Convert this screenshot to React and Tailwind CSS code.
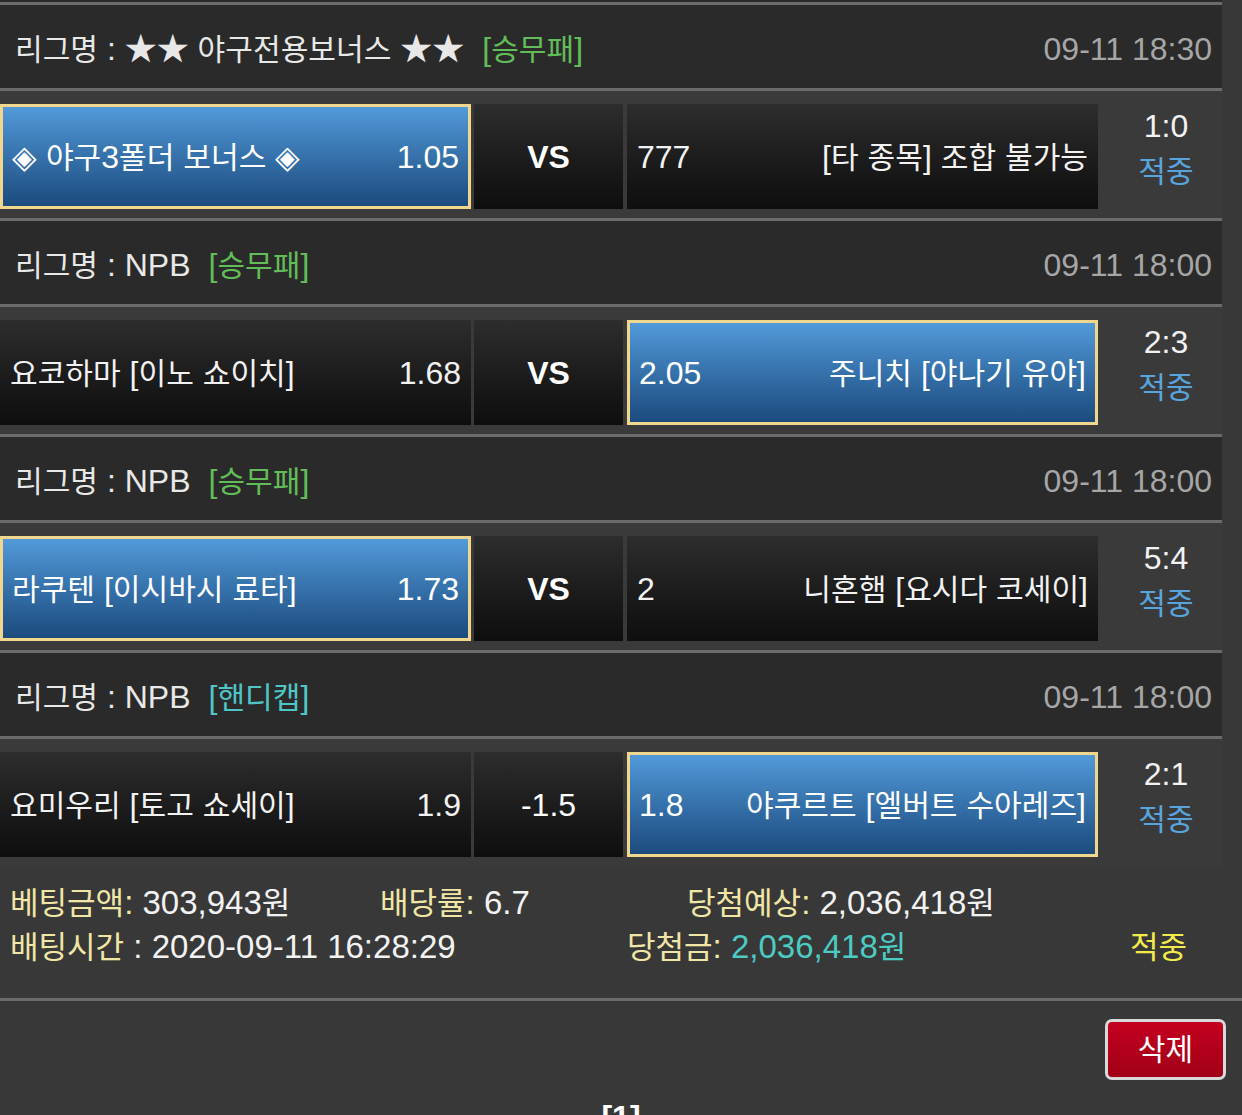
import React from 'react';

// Hangul glyphs in the original font are a bit narrower than Noto CJK's full em,
// so Hangul runs are set slightly smaller than the Latin text around them.
const HANGUL = /([\uAC00-\uD7A3]+)/;

function K({ children }) {
  return String(children)
    .split(HANGUL)
    .map((part, i) =>
      i % 2 ? (
        <span key={i} className="text-[0.94em]">
          {part}
        </span>
      ) : (
        part
      )
    );
}

const games = [
  {
    league: '★★ 야구전용보너스 ★★',
    tag: '승무패',
    tagClass: 'text-[#62bd58]',
    time: '09-11 18:30',
    home: '◈ 야구3폴더 보너스 ◈',
    homeOdds: '1.05',
    mid: 'VS',
    awayOdds: '777',
    away: '[타 종목] 조합 불가능',
    score: '1:0',
    pick: 'home',
  },
  {
    league: 'NPB',
    tag: '승무패',
    tagClass: 'text-[#62bd58]',
    time: '09-11 18:00',
    home: '요코하마 [이노 쇼이치]',
    homeOdds: '1.68',
    mid: 'VS',
    awayOdds: '2.05',
    away: '주니치 [야나기 유야]',
    score: '2:3',
    pick: 'away',
  },
  {
    league: 'NPB',
    tag: '승무패',
    tagClass: 'text-[#62bd58]',
    time: '09-11 18:00',
    home: '라쿠텐 [이시바시 료타]',
    homeOdds: '1.73',
    mid: 'VS',
    awayOdds: '2',
    away: '니혼햄 [요시다 코세이]',
    score: '5:4',
    pick: 'home',
  },
  {
    league: 'NPB',
    tag: '핸디캡',
    tagClass: 'text-[#4fc6c6]',
    time: '09-11 18:00',
    home: '요미우리 [토고 쇼세이]',
    homeOdds: '1.9',
    mid: '-1.5',
    awayOdds: '1.8',
    away: '야쿠르트 [엘버트 수아레즈]',
    score: '2:1',
    pick: 'away',
  },
];

function LeagueHeader({ game }) {
  return (
    <div className="h-[89px] border-y-[3px] border-[#6b6b6b] bg-[#2a2a2a] flex items-center justify-between pl-[15px] pr-[10px] pt-[4px]">
      <div className="text-[#e8e8e8] whitespace-nowrap">
        <K>{`리그명 : ${game.league}`}</K>
        <span className={`ml-[18px] ${game.tagClass}`}>
          <K>{`[${game.tag}]`}</K>
        </span>
      </div>
      <div className="text-[#a6a6a6]">{game.time}</div>
    </div>
  );
}

function Pick({ picked, children }) {
  return (
    <div
      className={
        picked
          ? 'w-[471px] h-full flex items-center justify-between px-[9px] border-[3px] border-[#f1d68e] bg-linear-to-b from-[#519ad9] to-[#1c4b7e] text-white whitespace-nowrap'
          : 'w-[471px] h-full flex items-center justify-between px-[10px] bg-linear-to-b from-[#2d2d2d] to-[#0e0e0e] text-[#f2f2f2] whitespace-nowrap'
      }
    >
      {children}
    </div>
  );
}

function GameRow({ game }) {
  return (
    <div className="h-[127px] pt-[13px] pb-[9px] bg-[#3a3a3a] flex">
      <Pick picked={game.pick === 'home'}>
        <span>
          <K>{game.home}</K>
        </span>
        <span>{game.homeOdds}</span>
      </Pick>
      <div
        className={`ml-[3px] w-[149px] h-full flex items-center justify-center bg-linear-to-b from-[#2d2d2d] to-[#0e0e0e] text-white ${
          game.mid === 'VS' ? 'font-bold' : ''
        }`}
      >
        {game.mid}
      </div>
      <div className="ml-[4px]">
        <Pick picked={game.pick === 'away'}>
          <span>{game.awayOdds}</span>
          <span>
            <K>{game.away}</K>
          </span>
        </Pick>
      </div>
      <div className="flex-1 pl-[12px] text-center leading-[45px]">
        <div className="text-[#f2f2f2]">{game.score}</div>
        <div className="text-[#5aa4de]">
          <K>적중</K>
        </div>
      </div>
    </div>
  );
}

export default function App() {
  return (
    <div className="min-h-screen bg-[#383838] text-[32px] font-['Liberation_Sans','Noto_Sans_CJK_KR',sans-serif] overflow-hidden">
      <div className="h-[2px] w-[1222px] bg-[#2a2a2a]" />
      <div className="w-[1222px]">
        {games.map((g, i) => (
          <div key={i}>
            <LeagueHeader game={g} />
            <GameRow game={g} />
          </div>
        ))}
      </div>

      {/* Summary */}
      <div className="pt-[15px] pb-[29px] px-[10px] text-[33px] leading-[43px] whitespace-nowrap border-b-[3px] border-[#6b6b6b]">
        <div className="flex">
          <div className="w-[370px]">
            <span className="text-[#f0e7a6]">
              <K>베팅금액:</K>
            </span>{' '}
            <span className="text-[#f2f2f2]">
              <K>303,943원</K>
            </span>
          </div>
          <div className="w-[307px]">
            <span className="text-[#f0e7a6]">
              <K>배당률:</K>
            </span>{' '}
            <span className="text-[#f2f2f2]">6.7</span>
          </div>
          <div>
            <span className="text-[#f0e7a6]">
              <K>당첨예상:</K>
            </span>{' '}
            <span className="text-[#f2f2f2]">
              <K>2,036,418원</K>
            </span>
          </div>
        </div>
        <div className="flex">
          <div className="w-[617px]">
            <span className="text-[#f0e7a6]">
              <K>배팅시간</K>
            </span>
            <span className="text-[#f2f2f2]"> : 2020-09-11 16:28:29</span>
          </div>
          <div className="w-[503px]">
            <span className="text-[#f0e7a6]">
              <K>당첨금:</K>
            </span>{' '}
            <span className="text-[#4ccbc3]">
              <K>2,036,418원</K>
            </span>
          </div>
          <div className="text-[#f3ea4c]">
            <K>적중</K>
          </div>
        </div>
      </div>

      {/* Actions */}
      <div className="flex justify-end pt-[18px] pr-[16px]">
        <button className="w-[121px] h-[61px] rounded-[7px] border-[3px] border-[#d9d9d9] bg-linear-to-b from-[#c4001f] to-[#a10017] text-white flex items-center justify-center">
          <K>삭제</K>
        </button>
      </div>
      <div className="mt-[18px] text-center font-bold text-white leading-[38px]">[1]</div>
    </div>
  );
}
